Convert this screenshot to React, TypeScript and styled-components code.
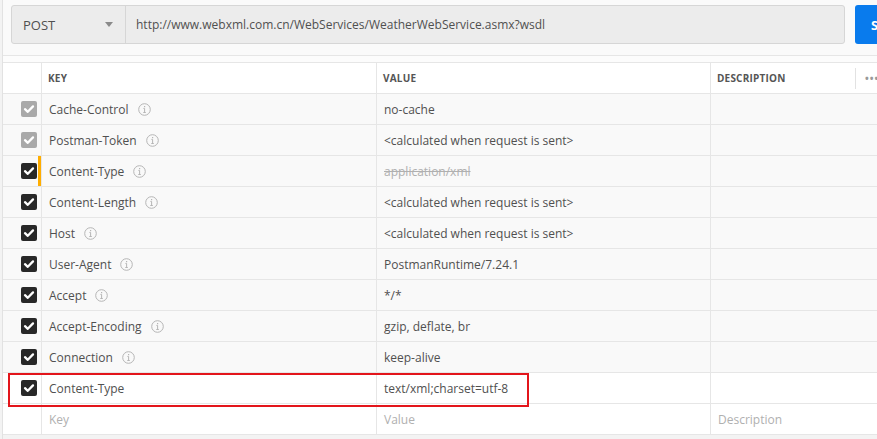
import React from "react";
import styled, { createGlobalStyle } from "styled-components";

const Global = createGlobalStyle`
  html, body { margin: 0; padding: 0; overflow: hidden; }
  body {
    background: #f2f2f2;
    font-family: "Open Sans", "Noto Sans", sans-serif;
    font-size: 12px;
    color: #505050;
  }
`;

const Page = styled.div`
  width: 877px;
  height: 439px;
  overflow: hidden;
  display: flex;
  background: #f0f0f0;
`;

const Gutter = styled.div`
  width: 2px;
  flex: none;
  background: #f3f3f3;
  border-right: 1px solid #e2e2e2;
`;

const Main = styled.div`
  flex: 1;
  min-width: 0;
  display: flex;
  flex-direction: column;
  background: #fafafa;
`;

const TopBar = styled.div`
  height: 56px;
  flex: none;
  padding: 5px 0 0 8px;
  box-sizing: border-box;
  display: flex;
  align-items: flex-start;
  gap: 10px;
  border-bottom: 1px solid #e6e6e6;
  background: #fafafa;
`;

const RequestBox = styled.div`
  width: 834px;
  height: 39px;
  flex: none;
  box-sizing: border-box;
  display: flex;
  align-items: stretch;
  background: #ececec;
  border: 1px solid #d6d6d6;
  border-radius: 3px;
`;

const Method = styled.div`
  width: 114px;
  flex: none;
  display: flex;
  align-items: center;
  justify-content: space-between;
  padding: 0 12px 0 11px;
  box-sizing: border-box;
  border-right: 1px solid #d6d6d6;
  font-size: 13px;
  color: #505050;
`;

const Caret = styled.span`
  width: 0;
  height: 0;
  border-left: 4px solid transparent;
  border-right: 4px solid transparent;
  border-top: 5px solid #8a8a8a;
`;

const Url = styled.div`
  flex: 1;
  display: flex;
  align-items: center;
  padding-left: 10px;
  font-size: 12px;
  color: #505050;
  white-space: nowrap;
`;

const SendButton = styled.button`
  flex: none;
  width: 90px;
  height: 39px;
  border: none;
  border-radius: 3px;
  background: #097bed;
  color: #fff;
  font-family: inherit;
  font-weight: 700;
  font-size: 13px;
  text-align: left;
  padding: 0 0 0 16px;
`;

const Spacer = styled.div`
  height: 6px;
  flex: none;
  background: #fcfcfc;
`;

const Table = styled.div`
  border-top: 1px solid #e6e6e6;
  display: flex;
  flex-direction: column;
`;

const Row = styled.div<{ $bg?: string }>`
  position: relative;
  height: 31px;
  flex: none;
  box-sizing: border-box;
  display: grid;
  grid-template-columns: 38px 335px 334px 1fr;
  border-bottom: 1px solid #e6e6e6;
  background: ${(p) => p.$bg ?? "#f9f9f9"};
`;

const Cell = styled.div<{ $muted?: boolean }>`
  display: flex;
  align-items: center;
  padding-left: 7px;
  border-left: 1px solid #e6e6e6;
  white-space: nowrap;
  overflow: hidden;
  color: ${(p) => (p.$muted ? "#b0b0b0" : "#505050")};
`;

const CheckCell = styled.div<{ $marked?: boolean }>`
  display: flex;
  align-items: center;
  justify-content: flex-end;
  padding-right: 4px;
  box-shadow: ${(p) => (p.$marked ? "inset -3px 0 0 #ffad00" : "none")};
`;

const HeadCell = styled(Cell)`
  font-size: 10px;
  font-weight: 700;
  letter-spacing: 0.2px;
  color: #555;
  padding-left: 6px;
`;

const DescHead = styled(HeadCell)`
  justify-content: space-between;
  padding-right: 0;
`;

const Dots = styled.span`
  display: flex;
  align-items: center;
  height: 21px;
  border-left: 1px solid #e2e2e2;
  padding-left: 9px;
  width: 12px;
  color: #999;
  font-size: 10px;
  letter-spacing: 1px;
`;

const Box = styled.span<{ $dim?: boolean }>`
  width: 16px;
  height: 16px;
  border-radius: 2px;
  background: ${(p) => (p.$dim ? "#a9a9a9" : "#282828")};
  display: flex;
  align-items: center;
  justify-content: center;
`;

const KeyText = styled.span`
  margin-right: 9px;
`;

const Struck = styled.span`
  text-decoration: line-through;
  color: #b0b0b0;
`;

const Highlight = styled.div`
  position: absolute;
  z-index: 2;
  left: 5px;
  top: 0px;
  width: 521px;
  height: 34px;
  box-sizing: border-box;
  border: 2px solid #e3151b;
  pointer-events: none;
`;

const Footer = styled.div`
  flex: 1;
  background: #f3f3f3;
`;

const Check = () => (
  <svg width="12" height="12" viewBox="0 0 12 12">
    <path d="M2 6.2 L4.8 8.8 L10 3.4" fill="none" stroke="#fff" strokeWidth="2.3" strokeLinecap="round" strokeLinejoin="round" />
  </svg>
);

const Info = () => (
  <svg width="13" height="13" viewBox="0 0 13 13">
    <circle cx="6.5" cy="6.5" r="5.8" fill="none" stroke="#b5b5b5" strokeWidth="1" />
    <rect x="6" y="3" width="1.2" height="1.2" fill="#b5b5b5" />
    <path d="M5.4 5.4 H6.6 V9.4 M5.3 9.5 H7.8" fill="none" stroke="#b5b5b5" strokeWidth="1" />
  </svg>
);

type H = { key: string; value: string; dim?: boolean; marked?: boolean; struck?: boolean; info?: boolean; bg?: string; boxed?: boolean };

const rows: H[] = [
  { key: "Cache-Control", value: "no-cache", dim: true, info: true },
  { key: "Postman-Token", value: "<calculated when request is sent>", dim: true, info: true },
  { key: "Content-Type", value: "application/xml", marked: true, struck: true, info: true },
  { key: "Content-Length", value: "<calculated when request is sent>", info: true },
  { key: "Host", value: "<calculated when request is sent>", info: true },
  { key: "User-Agent", value: "PostmanRuntime/7.24.1", info: true },
  { key: "Accept", value: "*/*", info: true },
  { key: "Accept-Encoding", value: "gzip, deflate, br", info: true },
  { key: "Connection", value: "keep-alive", info: true },
  { key: "Content-Type", value: "text/xml;charset=utf-8", bg: "#ffffff", boxed: true },
];

export default function App() {
  return (
    <>
      <Global />
      <Page>
        <Gutter />
        <Main>
          <TopBar>
            <RequestBox>
              <Method>
                POST
                <Caret />
              </Method>
              <Url>http://www.webxml.com.cn/WebServices/WeatherWebService.asmx?wsdl</Url>
            </RequestBox>
            <SendButton>Send</SendButton>
          </TopBar>
          <Spacer />
          <Table>
            <Row $bg="#ffffff">
              <CheckCell />
              <HeadCell>KEY</HeadCell>
              <HeadCell>VALUE</HeadCell>
              <DescHead>
                DESCRIPTION
                <Dots>•••</Dots>
              </DescHead>
            </Row>
            {rows.map((r, i) => (
              <Row key={i} $bg={r.bg}>
                <CheckCell $marked={r.marked}>
                  <Box $dim={r.dim}>
                    <Check />
                  </Box>
                </CheckCell>
                <Cell>
                  <KeyText>{r.key}</KeyText>
                  {r.info && <Info />}
                </Cell>
                <Cell>{r.struck ? <Struck>{r.value}</Struck> : r.value}</Cell>
                <Cell />
                {r.boxed && <Highlight />}
              </Row>
            ))}
            <Row $bg="#ffffff">
              <CheckCell />
              <Cell $muted>Key</Cell>
              <Cell $muted>Value</Cell>
              <Cell $muted>Description</Cell>
            </Row>
          </Table>
          <Footer />
        </Main>
      </Page>
    </>
  );
}
